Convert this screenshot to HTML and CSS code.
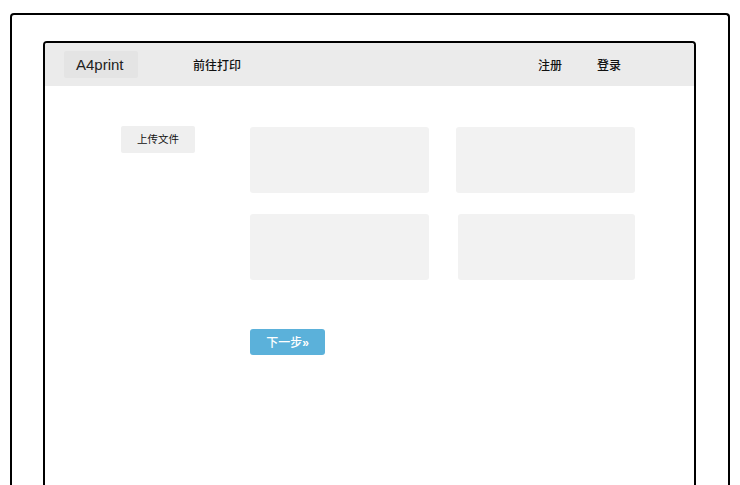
FILE: index.html
```html
<!DOCTYPE html>
<html lang="zh-CN">
<head>
    <meta charset="UTF-8">
    <meta name="viewport" content="width=device-width, initial-scale=1.0">
    <title>A4print</title>
    <link rel="stylesheet" href="styles.css">
</head>
<body>
    <div class="device">
        <div class="screen">
            <!-- 导航栏 -->
            <div class="navbar">
                <div class="logo">A4print</div>
                <a class="nav-link" href="#">前往打印</a>
                <div class="nav-right">
                    <a class="nav-link" href="#">注册</a>
                    <a class="nav-link" href="#">登录</a>
                </div>
            </div>

            <!-- 内容 -->
            <div class="main">
                <div class="sidebar">
                    <button class="upload-btn">上传文件</button>
                </div>
                <div class="content">
                    <div class="cards">
                        <div class="card"></div>
                        <div class="card"></div>
                        <div class="card"></div>
                        <div class="card shift"></div>
                    </div>
                    <button class="next-btn">下一步<span class="arrow">»</span></button>
                </div>
            </div>
        </div>
    </div>
</body>
</html>
```

FILE: styles.css
```css
body {
    margin: 0;
    background-color: #fff;
    font-family: "Noto Sans CJK SC", "Liberation Sans", sans-serif;
    overflow: hidden;
}

/* 外框和屏幕都延伸到底部 */
.device {
    margin: 13px 0 0 10px;
    width: 720px;
    height: 472px;
    border: 2px solid #000;
    border-bottom: none;
    border-radius: 4px 4px 0 0;
    box-sizing: border-box;
    padding: 26px 0 0 31px;
}

.screen {
    width: 653px;
    height: 444px;
    border: 2px solid #000;
    border-bottom: none;
    border-radius: 4px 4px 0 0;
    box-sizing: border-box;
}

.navbar {
    display: flex;
    align-items: center;
    height: 43px;
    padding-left: 19px;
    background-color: #ebebeb;
    border-radius: 2px 2px 0 0;
}

.logo {
    width: 74px;
    height: 27px;
    line-height: 27px;
    box-sizing: border-box;
    padding-left: 12px;
    background-color: #e4e4e4;
    border-radius: 2px;
    font-family: "Liberation Sans", sans-serif;
    font-size: 15px;
    color: #222;
}

.nav-link {
    font-size: 12px;
    font-weight: 500;
    color: #111;
    text-decoration: none;
}

.navbar > .nav-link {
    margin-left: 55px;
}

.nav-right {
    display: flex;
    gap: 35px;
    margin-left: auto;
    margin-right: 73px;
}

.main {
    display: flex;
    padding-top: 41px;
}

.sidebar {
    width: 205px;
    padding-left: 76px;
    box-sizing: border-box;
}

.upload-btn {
    display: block;
    margin-top: -1px;
    width: 74px;
    height: 27px;
    padding: 0 0 2px;
    border: none;
    border-radius: 2px;
    background-color: #efefef;
    font-family: inherit;
    font-size: 10.5px;
    color: #111;
}

.cards {
    display: grid;
    grid-template-columns: 179px 179px;
    column-gap: 27px;
    row-gap: 21px;
}

.card {
    height: 66px;
    background-color: #f2f2f2;
    border-radius: 3px;
}

.card.shift {
    margin-left: 2px;
}

.next-btn {
    margin-top: 49px;
    width: 75px;
    height: 26px;
    padding: 0 0 1px;
    border: none;
    border-radius: 3px;
    background-color: #5bb1da;
    font-family: inherit;
    font-size: 12px;
    font-weight: 500;
    color: #fff;
}

.arrow {
    font-family: "Liberation Sans", sans-serif;
    font-weight: bold;
}
```
